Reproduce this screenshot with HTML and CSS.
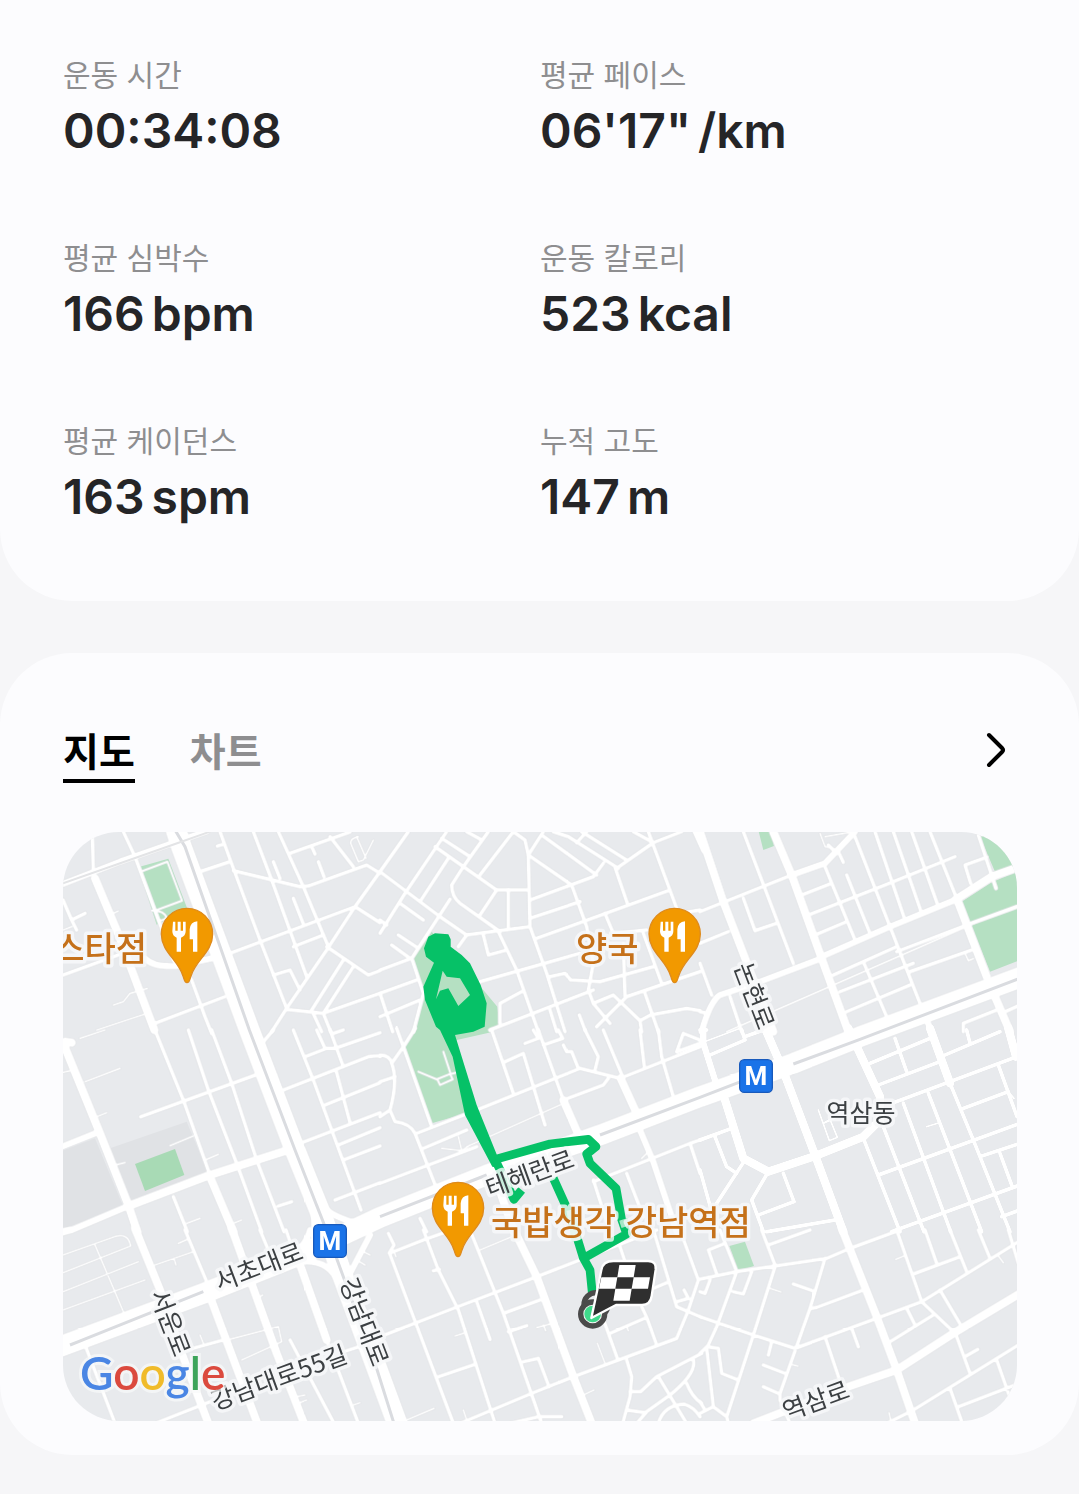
FILE: index.html
```html
<!DOCTYPE html>
<html lang="ko">

<head>
    <meta charset="UTF-8">
    <meta name="viewport" content="width=device-width, initial-scale=1.0">
    <title>운동 기록</title>
    <link rel="stylesheet" href="styles.css">
</head>

<body>
    <main class="page">
        <section class="card card-stats">
            <dl class="stats">
                <div class="stat">
                    <dt>운동 시간</dt>
                    <dd>00:34:08</dd>
                </div>
                <div class="stat">
                    <dt>평균 페이스</dt>
                    <dd>06'17"<span class="unit">/km</span></dd>
                </div>
                <div class="stat">
                    <dt>평균 심박수</dt>
                    <dd>166<span class="unit">bpm</span></dd>
                </div>
                <div class="stat">
                    <dt>운동 칼로리</dt>
                    <dd>523<span class="unit">kcal</span></dd>
                </div>
                <div class="stat">
                    <dt>평균 케이던스</dt>
                    <dd>163<span class="unit">spm</span></dd>
                </div>
                <div class="stat">
                    <dt>누적 고도</dt>
                    <dd>147<span class="unit">m</span></dd>
                </div>
            </dl>
        </section>

        <section class="card card-map">
            <div class="card-head">
                <div class="tabs">
                    <button type="button" class="tab active">지도</button>
                    <button type="button" class="tab">차트</button>
                </div>
                <button type="button" class="more" aria-label="더보기">
                    <svg width="22" height="36" viewBox="0 0 22 36">
                        <path d="M4 3 L17 16 Q19 18 17 20 L4 33" />
                    </svg>
                </button>
            </div>

            <svg class="map" viewBox="0 0 954 589" role="img" aria-label="운동 경로 지도">
                <svg width="954" height="589" viewBox="9 6 2862 1767">
                    <rect class="land" x="0" y="0" width="2880" height="1800" />

                    <!-- blocks and parks -->
                    <path class="block" d="M150 955 L380 875 L445 1030 L205 1120Z M0 965 L105 925 L190 1130 L0 1200Z" />
                    <path class="park" d="M234 112 L325 86 L382 236 L290 284Z" />
                    <path class="park dark" d="M225 1002 L345 957 L373 1035 L255 1083Z" />
                    <path class="park" d="M1115 305 L1055 385 L1090 490 L1060 600 L1030 650 L1115 880 L1220 850 L1190 630 L1300 605 L1318 580 L1312 530 L1270 480Z" />
                    <path class="park" d="M2095 0 L2130 0 L2142 48 L2110 60Z" />
                    <path class="park" d="M2760 20 L2805 125 L2880 105 L2880 0Z M2705 215 L2790 160 L2880 120 L2880 390 L2790 425Z" />
                    <path class="park" d="M2008 1248 L2055 1235 L2082 1308 L2035 1322Z" />

                    <g class="roads">
                        <!-- row 1 -->
                        <g>
                            <path class="r1" d="M160 525 L190 515 L210 490 L262 475 M110 600 L200 570 L262 550 M9 300 L35 290 M160 250 L175 243" />
                            <path class="r1" d="M940 30 L910 90 L895 95 L872 40 Q870 25 895 20 M890 20 L918 85" />
                            <path class="r2" d="M97 10 L100 120 M190 5 L225 80 L340 390 L395 450 L435 560 L455 610 M9 210 L35 270 L75 250 M50 300 L35 270 M9 435 L230 355" />
                            <path class="r2" d="M480 5 L520 115 L600 330 L680 535 M580 5 L635 150 L740 440 M655 5 L730 170 L805 350 M690 70 L870 6 M810 20 L880 110 M755 50 L765 72 M640 95 L660 145 M775 95 L792 140 M700 205 L730 282 M472 48 L490 43" />
                            <path class="r2" d="M520 122 L720 170 L745 168 L920 105 L960 130 M420 125 L510 95 M510 370 L885 230 L960 278 M960 125 L885 230 L800 360 L680 535 L635 605 M800 350 L925 435 L960 422 M700 350 L790 315 M640 435 L690 420 L720 480 M850 390 L755 540 M880 410 L790 550 L960 490 M680 538 L790 550 L812 605 M755 540 L785 605 M285 580 L495 500" />
                            <path class="r1" d="M242 125 L322 95 L366 212 L285 242Z M275 242 Q310 240 320 262 Q295 285 290 250" />
                            <path class="r3" d="M0 165 L180 95 L330 42 L440 4 M255 385 Q280 412 350 408 L455 385" />
                            <path class="r4" d="M105 145 L170 300 L283 600" />
                        </g>
                        <g transform="translate(960 0)">
                            <path class="r2" d="M85 5 L0 125 L180 260 L260 315 L450 290 M200 5 L75 190 L0 310 M165 50 L350 180 L440 180 M185 25 L270 80 M260 5 L305 30 M325 5 L250 110 L215 165 Q215 200 240 220 L360 305 M205 85 L120 215 M400 5 L300 135 M400 5 L435 30 L445 75 L450 290 L500 430 L555 605" />
                            <path class="r2" d="M490 5 L445 75 L575 165 L620 290 L640 400 L625 480 L640 520 L690 580 M485 15 L650 135 M520 5 L565 20 L715 115 M620 5 L590 38 M605 5 L740 90 M670 100 L640 140 L450 210 M710 115 L820 38 L905 5 M760 5 L820 38 M805 5 L890 235 M705 112 L742 220 M450 265 L600 215 M470 325 L870 180 M350 180 L300 255 M385 180 L385 290 M355 305 L410 420 L475 605" />
                            <path class="r2" d="M300 455 L600 370 M310 315 L325 375 L380 360 M260 315 L235 350 M0 420 L95 385 M210 208 L95 385 L130 490 L100 605 M0 490 L110 450 M0 560 L120 510 M0 490 L38 605 M60 220 L130 270 M55 315 L115 355 M35 345 L90 385 M0 270 L20 285 M425 485 L360 520 L360 580 M330 600 L640 480" />
                            <path class="r2" d="M740 500 L960 425 M510 440 L555 430 L572 450 L660 455 L820 410 M730 340 L735 500 M675 250 L700 310 L800 300 M790 310 L845 460 M640 520 L700 495 L780 572 L812 555 L920 535 L960 542 M740 500 L650 590 M598 555 L615 600 M510 540 L530 605 M795 490 L835 605 M780 572 L785 605 M900 250 L960 240" />
                            <path class="r4" d="M948 0 L975 60" />
                        </g>
                        <g transform="translate(1920 0)">
                            <path class="r1" d="M80 605 L800 290 L835 272 M795 370 L805 392 L820 386 M360 10 L375 50 L400 55 M375 20 L460 5" />
                            <path class="r2" d="M130 5 L280 400 M130 205 L165 302 L230 280 M375 110 L465 330 M305 195 L395 160 M325 255 L555 165 L765 80 M345 315 L440 275 M440 135 L510 310 M465 20 L570 290 L660 520 M525 5 L615 270 M580 5 L665 250 M635 5 L715 230 M690 5 L770 205 M415 65 L430 97 M385 45 L410 70" />
                            <path class="r2" d="M400 435 L590 350 M420 485 L640 400 M590 365 L800 285 L951 230 M630 425 L815 360 M440 545 L630 465 M490 395 L560 560 M0 340 L85 305 M812 160 L795 105 L860 82 M835 15 L888 175 M0 245 L275 135 M790 605 L790 580 L890 540 M905 550 L960 525 M0 400 L35 495 M90 500 L125 605 M0 545 L20 550" />
                            <path class="r3" d="M275 135 L375 100 L465 5 M365 385 L180 455 L60 495 Q30 515 5 605 M770 208 L570 290 L365 380 M680 570 L695 605" />
                            <path class="r4" d="M0 5 L70 215 L145 410 L220 605 M220 5 L275 135 L365 385 L445 605 M765 210 L875 140 L960 110 M770 205 L860 440 M885 500 L930 605" />
                        </g>

                        <!-- row 2 -->
                        <g transform="translate(0 600)">
                            <path class="r1" d="M60 25 L135 0 M75 155 L180 115 M110 260 L140 248 M165 405 L195 398 M330 347 L400 318 M440 388 L475 373 M380 580 L420 565 M520 580 L545 570 M9 127 L40 120" />
                            <path class="r2" d="M285 0 L370 210 L450 435 M385 0 L445 180 L530 400 L605 605 M455 0 L515 160 L590 390 L672 605 M242 260 L600 130 M340 500 L382 605 M655 528 L695 515" />
                            <path class="r2" d="M610 35 L640 0 M700 0 L760 150 L903 540 M735 80 L800 55 L825 55 L960 8 M670 180 L925 80 Q960 75 960 80 M770 0 L795 55 M810 0 L850 110 M828 120 L870 278 M795 225 L960 158 M725 338 L960 248 M835 345 L960 293 M850 390 L960 348 M825 510 L960 458 M820 10 L850 0" />
                            <path class="r3" d="M0 352 L110 308 M0 605 L35 600 L200 530 M780 520 Q810 560 900 582 L970 568 M755 480 Q765 540 762 620" />
                            <path class="r4" d="M10 40 L120 310 L205 525 L232 605 M200 530 L450 435 L690 358 M450 440 L520 605 M15 35 L35 38" />
                        </g>
                        <g transform="translate(960 600)">
                            <path class="r1" d="M260 350 L540 225 M185 355 L245 362 L235 320 M245 362 L270 345 M115 125 L170 148 L210 132 L218 148 L180 165 L172 148 M190 65 L212 132 L228 128 M785 385 L810 360" />
                            <path class="r2" d="M0 75 Q30 75 35 100 L70 50 L105 -5 M50 -5 L70 50 L155 290 M35 100 Q55 150 30 240 L45 275 Q90 280 105 310 L195 540 M0 155 L45 140 M0 260 L30 240 M110 310 L290 240 L600 115 L720 145 L960 50 M130 355 L260 300 M0 460 L290 350 M335 0 L400 190 M375 95 L430 70 L495 285 M435 40 L475 25 L460 0 M475 0 L550 210 M490 45 L548 25 L535 0 M550 45 L560 65 L575 65 L595 115 M615 0 L655 80 L645 120 M670 0 L730 145" />
                            <path class="r2" d="M780 0 L793 110 M835 0 L845 80 L880 200 M550 210 L670 165 L685 145 M910 10 L890 65 L960 40 M910 10 L960 30 M640 455 L930 340 L960 430 M640 450 L690 605 M740 430 L790 560 M930 340 L960 330 M120 565 L140 605" />
                            <path class="r3" d="M780 300 L820 395 L890 605" />
                            <path class="r4" d="M722 145 L770 250 M550 210 L600 325 M355 470 L402 605" />
                        </g>
                        <g transform="translate(1920 600)">
                            <path class="r1" d="M0 40 L120 -5 M355 240 L388 332 L412 322 L390 268 L370 280 L410 262 M680 290 L712 280 M925 185 L942 205" />
                            <path class="r2" d="M510 100 L690 25 M535 165 L720 95 M585 25 L620 125 M735 75 L900 5 M790 235 L925 185 M575 220 L750 155 L951 80 M895 105 L951 260 M800 0 L810 40 M535 435 L960 280 M490 325 L600 605 M550 290 L672 605 M610 220 L752 605 M685 190 L845 605 M750 160 L820 330 L930 605 M840 380 L960 340 M900 370 L935 465 M575 605 L960 465 M905 560 L960 540" />
                            <path class="r2" d="M205 425 L155 510 L190 605 M175 555 L282 515 L250 430 M200 605 L405 570 M0 330 L95 295 M45 320 L80 410 L110 430 M135 390 L50 520 M0 420 L52 605 M30 75 L135 30 L125 0 M135 20 L190 0 M0 0 L20 0" />
                            <path class="r3" d="M10 0 L10 40 L48 160" />
                            <path class="r4" d="M195 -5 L245 110 L345 375 L430 605 M445 -5 L540 200 L540 270 L490 320 L340 380 L205 425 L130 385 L75 210 M690 -5 L750 160 M925 -5 L948 80" />
                        </g>

                        <!-- row 3 -->
                        <g transform="translate(0 1200)">
                            <path class="r1" d="M9 75 L170 18 Q205 10 212 48 L9 128 M9 185 L235 95 M9 240 L255 150 M105 45 L190 245 M285 105 L400 65 M342 85 L348 105 M355 40 L382 28 M420 315 L432 345 M545 390 L665 335 L655 290 L500 330 M600 200 L608 195 M900 60 L930 75 M890 90 L915 105 M710 500 L735 495 M715 520 L740 510 M880 525 L900 518" />
                            <path class="r2" d="M375 0 L438 150 M600 0 L625 60 M678 0 L695 50 M75 345 L165 580 M380 360 L490 330 M285 580 L450 515 M850 365 L960 330 M690 330 L822 580 M800 330 L895 580" />
                            <path class="r3" d="M930 15 L870 130 M750 0 Q735 55 680 85 M730 95 Q810 90 835 160 M0 10 L30 0" />
                            <path class="r4" d="M225 -5 L300 180 L365 370 L445 580 M450 200 L592 580 M515 -5 L650 370 L732 580 M715 90 L800 330" />
                        </g>
                        <g transform="translate(960 1200)">
                            <path class="r1" d="M80 570 L162 535 M250 540 L260 570 M225 318 L250 310 M470 293 L510 282 M490 285 L497 302 M652 340 L675 400 M610 495 L642 480 M42 65 L48 80 M740 290 L745 302 M300 60 L395 20" />
                            <path class="r2" d="M25 10 L42 45 L28 68 L220 580 M28 70 L130 30 L200 5 M130 0 L175 120 L235 240 L345 580 M160 122 L178 118 M270 0 L370 250 L485 580 M0 320 L220 235 L470 140 L830 0 M370 250 L480 210 M175 440 L288 402 M385 305 L440 287 M290 215 L330 328 M430 395 L475 385 L507 470 M240 580 L455 490 L580 440 L890 325 L925 240" />
                            <path class="r2" d="M660 240 L712 385 M690 310 L800 262 L830 345 M785 230 L800 262 M720 50 L735 95 M820 0 L890 230 L965 262 M900 0 L955 150 L925 240 M890 215 L925 205 L912 180 M740 390 L755 440 L750 500 L728 580 M750 485 L782 485 L830 440 L965 370 M742 540 L795 548 L870 495 Q950 430 940 390 M835 440 L920 580 M835 580 Q850 525 912 522 Q940 530 960 560 M920 460 Q935 500 965 520 M770 580 L800 545 M390 580 L475 560 L545 560 M820 175 L860 158" />
                            <path class="r4" d="M400 -5 L470 140 L580 440 L635 580" />
                        </g>
                        <g transform="translate(1920 1200)">
                            <path class="r1" d="M210 175 L243 186 M270 402 L294 408 M587 88 L612 78 M893 75 L910 98 M567 548 L572 570" />
                            <path class="r2" d="M0 147 L110 125 L380 85 L450 55 L600 0 M60 0 L110 125 L50 290 L20 355 L40 530 L80 560 M50 132 L25 60 L75 40 M0 260 L160 315 L285 355 L665 215 L955 35 M225 110 L160 315 L80 560 L85 580 M185 0 L225 105 M375 85 L330 235 L240 490 L240 510 L270 580 M205 45 L330 0 M335 235 L350 232 L490 180 M280 162 L338 182 M155 125 L130 192 L100 185 M0 185 L15 190 L30 150 M570 335 L700 255" />
                            <path class="r2" d="M665 215 L760 305 M590 0 L665 215 M675 0 L710 100 M645 130 L780 80 M750 0 L800 125 M835 0 L870 85 M925 0 L955 100 M620 235 L645 285 M720 180 L785 290 M770 320 L810 430 M795 380 L833 358 M560 580 L640 540 L955 345 M750 475 L787 580 M775 530 L945 465 M890 390 L927 495 M375 320 L422 460 M455 295 L475 350 M190 405 L255 430 M190 470 L235 490 M215 335 L205 375 M20 350 L55 355 L65 430 L115 450 M0 370 L20 350 M0 550 L40 530 M0 515 L15 540" />
                            <path class="r4" d="M160 580 L430 475 L590 420 L760 310 L960 190 M425 -5 L530 260 L590 420 L645 580" />
                        </g>

                        <!-- avenues -->
                        <path class="r5" d="M348 0 L364 50 L568 600 L705 960 L790 1170 L845 1330 L945 1600 L1015 1790" />
                        <path class="r5" d="M0 1550 L430 1390 L720 1275 L960 1162 L1280 1035 L1620 915 L1920 800 L2200 700 L2400 620 L2880 442" />
                    </g>
                    <path class="rail" d="M345 0 L375 50 L568 600 L705 960 L795 1190 L850 1340 L945 1600 L1005 1790" />
                    <path class="rail" d="M30 1545 L430 1385 M960 1160 L1280 1035 M1620 915 L1920 802 L2050 752 M2200 702 L2400 628 L2880 445" />
                    <path class="line" d="M9 160 L345 42 L450 5" />

                    <!-- running route -->
                    <path class="route-area" d="M1105 320 L1125 310 L1165 313 L1172 328 L1172 350 L1205 375 L1230 400 L1262 465 L1280 520 L1274 590 L1240 605 L1185 615 L1250 825 L1312 978 L1325 1015 L1297 1010 L1215 855 L1178 680 L1140 600 L1128 590 L1095 510 L1090 470 L1122 398 L1098 380 L1092 355Z M1148 422 L1160 440 L1200 445 L1230 495 L1195 528 L1165 475 L1140 482 L1128 508Z" />
                    <path class="route" d="M1306 988 L1470 942 L1585 928 L1608 950 L1580 972 L1590 1000 L1668 1075 L1684 1165 L1700 1212 L1572 1284" />
                    <path class="route" d="M1306 990 L1362 1108 L1385 1080 M1480 1045 L1532 1160 L1570 1284 L1590 1320 L1597 1390" />
                    <path class="route-fade" d="M1532 1140 L1548 1232 M1690 1168 L1697 1190" />

                    <!-- start and finish -->
                    <circle class="dot-ring" cx="1608" cy="1424" r="36" />
                    <circle class="dot-ring light" cx="1598" cy="1452" r="36" />
                    <circle class="dot" cx="1598" cy="1452" r="25" />
                    <path class="flag" d="M1660 1293 H1764 Q1790 1293 1787 1319 L1775 1398 Q1771 1425 1746 1425 H1668 L1594 1464 L1612 1380 L1624 1320 Q1628 1293 1660 1293Z" />
                    <path class="check" d="M1678 1305 H1727 L1721 1342 H1770 L1764 1376 H1715 L1709 1412 H1660 L1666 1376 H1617 L1624 1342 H1672Z" />
                    <path class="flag-mid" d="M1672 1342 H1721 L1715 1376 H1666Z" />

                    <!-- restaurants -->
                    <defs>
                        <g id="pin">
                            <path class="pin" d="M0 146 C-8 146 -8 136 -12 126 C-26 78 -77 54 -77 0 A77 77 0 0 1 77 0 C77 54 26 78 12 126 C8 136 8 146 0 146Z" />
                            <path class="fork" d="M-42 -37 h7 v27 h7 v-27 h9 v27 h7 v-27 h8 v29 q0 14 -14 19 v42 h-13 v-42 q-13 -5 -13 -19Z M31 -38 v91 h-13 v-37 h-10 v-30 q2 -22 23 -24Z" />
                        </g>
                    </defs>
                    <use href="#pin" x="381" y="312" />
                    <use href="#pin" x="1844" y="312" />
                    <use href="#pin" x="1194" y="1134" />

                    <!-- subway -->
                    <rect class="metro" x="2039" y="689" width="98" height="98" rx="14" />
                    <rect class="metro" x="761" y="1184" width="98" height="98" rx="14" />
                </svg>

                <g class="metro-text">
                    <text x="693" y="253">M</text>
                    <text x="267" y="418">M</text>
                </g>
                <g class="place">
                    <text x="84" y="129" text-anchor="end">스타점</text>
                    <text x="513" y="129">양국</text>
                    <text x="428" y="403">국밥생각 강남역점</text>
                </g>
                <g class="street">
                    <text x="798" y="290">역삼동</text>
                    <text transform="translate(470 350) rotate(-20)">테헤란로</text>
                    <text transform="translate(199 443) rotate(-21)">서초대로</text>
                    <text transform="translate(219 554) rotate(-20)">강남대로55길</text>
                    <text transform="translate(756 577) rotate(-20)">역삼로</text>
                    <text transform="translate(683 167) rotate(69)">논현로</text>
                    <text transform="translate(99 494) rotate(69)">서운로</text>
                    <text transform="translate(293 493) rotate(69)">강남대로</text>
                </g>
                <text class="google" x="17" y="558"><tspan class="blue">G</tspan><tspan class="red">o</tspan><tspan class="yellow">o</tspan><tspan class="blue">g</tspan><tspan class="green">l</tspan><tspan class="red">e</tspan></text>
            </svg>
        </section>
    </main>
</body>

</html>
```

FILE: styles.css
```css
* {
    padding: 0;
    margin: 0;
    box-sizing: border-box;
}

body {
    background-color: #f6f6f8;
    font-family: Inter, "Noto Sans CJK KR", sans-serif;
    color: #252527;
}

button {
    border: none;
    background: none;
    font: inherit;
    cursor: pointer;
}

.page {
    display: flex;
    flex-direction: column;
    gap: 52px;
    padding-bottom: 39px;
}

.card {
    background-color: #fcfcfe;
    padding: 0 62px 0 63px;
}

/* stats */
.card-stats {
    padding-top: 53px;
    padding-bottom: 74px;
    border-radius: 0 0 72px 72px;
}

.stats {
    display: grid;
    grid-template-columns: 1fr 1fr;
    row-gap: 75px;
}

.stat dt {
    font-family: "Noto Sans CJK KR", sans-serif;
    font-size: 30px;
    line-height: 40px;
    color: #8e8e90;
}

.stat dd {
    margin-top: 8px;
    font-size: 48px;
    font-weight: 600;
    line-height: 60px;
}

.unit {
    margin-left: 7px;
}

/* map card */
.card-map {
    padding-top: 70px;
    padding-bottom: 34px;
    border-radius: 72px;
}

.card-head {
    display: flex;
    justify-content: space-between;
    align-items: flex-start;
    margin-bottom: 49px;
}

.tabs {
    display: flex;
    gap: 55px;
}

.tab {
    padding-bottom: 4px;
    font-family: "Noto Sans CJK KR", sans-serif;
    font-size: 39px;
    font-weight: 700;
    line-height: 52px;
    color: #8e8e90;
    border-bottom: 4px solid transparent;
}

.tab.active {
    color: #000;
    border-color: #000;
}

.more {
    display: flex;
    padding: 9px 10px;
}

.more path {
    fill: none;
    stroke: #000;
    stroke-width: 4;
    stroke-linecap: round;
}

.map {
    display: block;
    width: 100%;
    height: auto;
    border-radius: 56px;
}

.land {
    fill: #e8eaed;
}

.block {
    fill: #e0e2e5;
}

.park {
    fill: #b5e0c2;
}

.park.dark {
    fill: #a8dab5;
}

.roads {
    fill: none;
    stroke: #fff;
    stroke-linejoin: round;
    stroke-linecap: round;
    filter: drop-shadow(0 0 1px #c4c7cc);
}

.r1 {
    stroke-width: 6;
}

.r2 {
    stroke-width: 12;
}

.r3 {
    stroke-width: 20;
}

.r4 {
    stroke-width: 26;
}

.r5 {
    stroke-width: 64;
}

.rail {
    fill: none;
    stroke: #dadce0;
    stroke-width: 9;
}

.line {
    fill: none;
    stroke: #e3e4e6;
    stroke-width: 6;
}

.route-area {
    fill: #06c167;
    fill-rule: evenodd;
}

.route,
.route-fade {
    fill: none;
    stroke: #06c167;
    stroke-width: 26;
    stroke-linejoin: round;
}

.route-fade {
    stroke: #a3e6c4;
}

.dot-ring {
    fill: #e8eaed;
    stroke: #4a4a4a;
    stroke-width: 16;
}

.dot-ring.light {
    fill: #f4f4f4;
}

.dot {
    fill: #3fd98b;
}

.flag {
    fill: #2f2f2f;
    stroke: #fff;
    stroke-width: 7;
    stroke-linejoin: round;
}

.check {
    fill: #fff;
}

.flag-mid {
    fill: #2f2f2f;
}

.pin {
    fill: #f29900;
    stroke: #de8a1c;
    stroke-width: 4;
}

.fork {
    fill: #fff;
}

.metro {
    fill: #1a73e8;
    stroke: #185abc;
    stroke-width: 4;
}

/* map labels */
.metro-text {
    font-family: Roboto, sans-serif;
    font-size: 26px;
    font-weight: 700;
    fill: #fff;
    text-anchor: middle;
}

.place,
.street {
    font-family: "Noto Sans CJK KR", sans-serif;
    font-weight: 500;
    paint-order: stroke;
    stroke: #f8f9fa;
    stroke-opacity: .8;
    stroke-width: 7;
    stroke-linejoin: round;
}

.place {
    font-size: 34px;
    fill: #c5711a;
}

.street {
    font-size: 25px;
    font-weight: 400;
    fill: #3c4043;
    text-anchor: middle;
}

.google {
    font-family: Lato, sans-serif;
    font-size: 46px;
    font-weight: 600;
    paint-order: stroke;
    stroke: #f8f9fa;
    stroke-opacity: .7;
    stroke-width: 6;
}

.blue {
    fill: #4a86e4;
}

.red {
    fill: #db4a3e;
}

.yellow {
    fill: #f0bb2a;
}

.green {
    fill: #3da45a;
}
```
